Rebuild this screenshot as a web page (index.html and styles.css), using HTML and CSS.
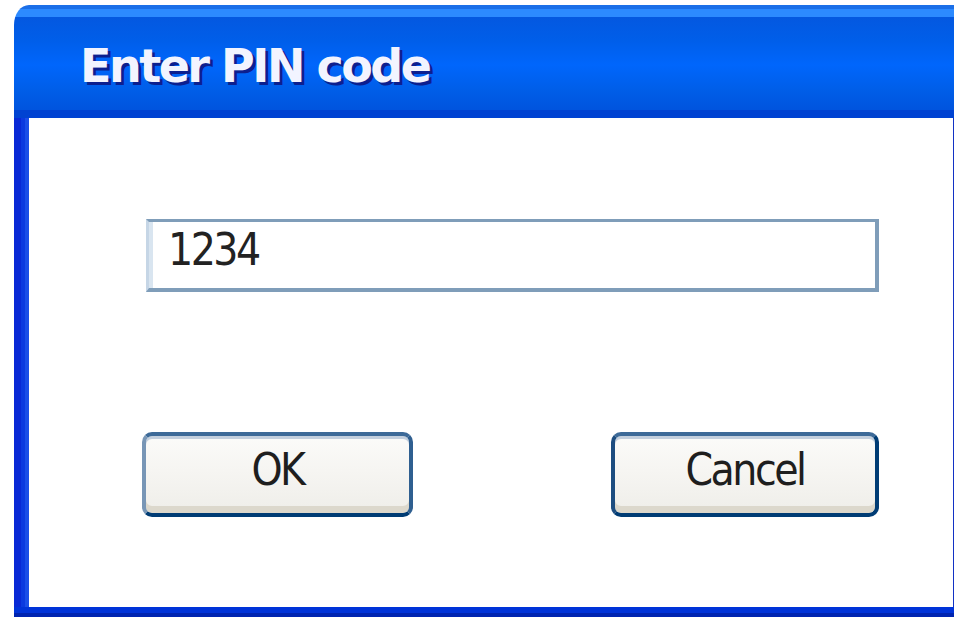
FILE: index.html
```html
<!DOCTYPE html>
<html lang="en">
<head>
<meta charset="utf-8">
<title>Enter PIN code</title>
<link rel="stylesheet" href="styles.css">
</head>
<body>
  <div class="window">
    <div class="titlebar">
      <span class="title">Enter PIN code</span>
    </div>
    <div class="frame">
      <div class="client">
        <div class="field">1234</div>
        <div class="actions">
          <button class="btn btn-default" type="button">OK</button>
          <button class="btn btn-cancel" type="button">Cancel</button>
        </div>
      </div>
      <div class="edge-right"></div>
    </div>
  </div>
</body>
</html>
```

FILE: styles.css
```css
html, body {
  margin: 0;
  padding: 0;
  background: #ffffff;
  width: 954px;
  height: 617px;
  overflow: hidden;
}

.window {
  width: 960px;
  margin: 5px 0 0 14px;
  display: flex;
  flex-direction: column;
}

/* Luna-style caption bar */
.titlebar {
  height: 113px;
  box-sizing: border-box;
  padding: 38px 0 0 66px;
  border-top-left-radius: 15px 20px;
  background: linear-gradient(to bottom,
    #1b6fe8 0, #1b6fe8 4px,
    #2c8aff 4px, #2c8aff 12px,
    #0458e0 12px,
    #005ee9 35px,
    #0066fc 60px,
    #005ee8 85px,
    #0054de 105px,
    #0043d2 105px, #0043d2 113px);
}

.title {
  display: block;
  font-family: "DejaVu Sans", "Liberation Sans", sans-serif;
  font-weight: bold;
  font-size: 46px;
  line-height: 46px;
  letter-spacing: -2.5px;
  color: #f2f4ff;
  text-shadow: 3px 3px 0 #0c1f8f;
  white-space: nowrap;
}

/* Blue window border around the white client area */
.frame {
  display: flex;
  padding: 0 0 10px 15px;
  background:
    linear-gradient(to bottom, transparent 0, transparent 489px, #0033d8 489px, #0033d8 495px, #0024b0 495px),
    linear-gradient(to right, #0829d6 0, #0829d6 7px, #0b3ae0 7px, #0b3ae0 11px, #1a4fe8 11px, #1a4fe8 15px, transparent 15px);
}

.edge-right {
  width: 21px;
  background: linear-gradient(to right, #1232c4 0, #1232c4 1px, #0b3ae0 1px);
}

.client {
  width: 924px;
  height: 489px;
  box-sizing: border-box;
  background: #ffffff;
  padding-top: 101px;
  display: flex;
  flex-direction: column;
  gap: 140px;
}

.field {
  margin-left: 117px;
  width: 733px;
  height: 73px;
  box-sizing: border-box;
  border: 4px solid #7f9db9;
  border-top-width: 3px;
  border-left: 3px solid #c6d6e6;
  box-shadow: inset 4px 0 0 #d9e5f0;
  padding: 6px 0 0 19px;
  font-family: "DejaVu Sans Condensed", "DejaVu Sans", sans-serif;
  font-size: 44px;
  line-height: 44px;
  letter-spacing: -2.5px;
  color: #222222;
}

.actions {
  display: flex;
  padding-left: 113px;
  gap: 198px;
}

.btn {
  height: 85px;
  box-sizing: border-box;
  border: 4px solid #003c74;
  border-radius: 10px;
  background: linear-gradient(to bottom, #fbfbf9 0%, #f6f5f2 45%, #efeee9 100%);
  box-shadow: inset 0 3px 0 #c3cfdd, inset 0 -7px 0 #dcd8cc;
  padding: 0 0 10px 0;
  font-family: "DejaVu Sans Condensed", "DejaVu Sans", sans-serif;
  font-size: 44px;
  line-height: 44px;
  letter-spacing: -2.5px;
  color: #1e1e1e;
  cursor: default;
}

.btn-default {
  width: 271px;
  border-color: #3d6a98 #2f5f90 #003c74 #7896b6;
}

.btn-cancel {
  width: 268px;
  border-color: #3d6a98 #003c74 #003c74 #1d4d80;
}
```
